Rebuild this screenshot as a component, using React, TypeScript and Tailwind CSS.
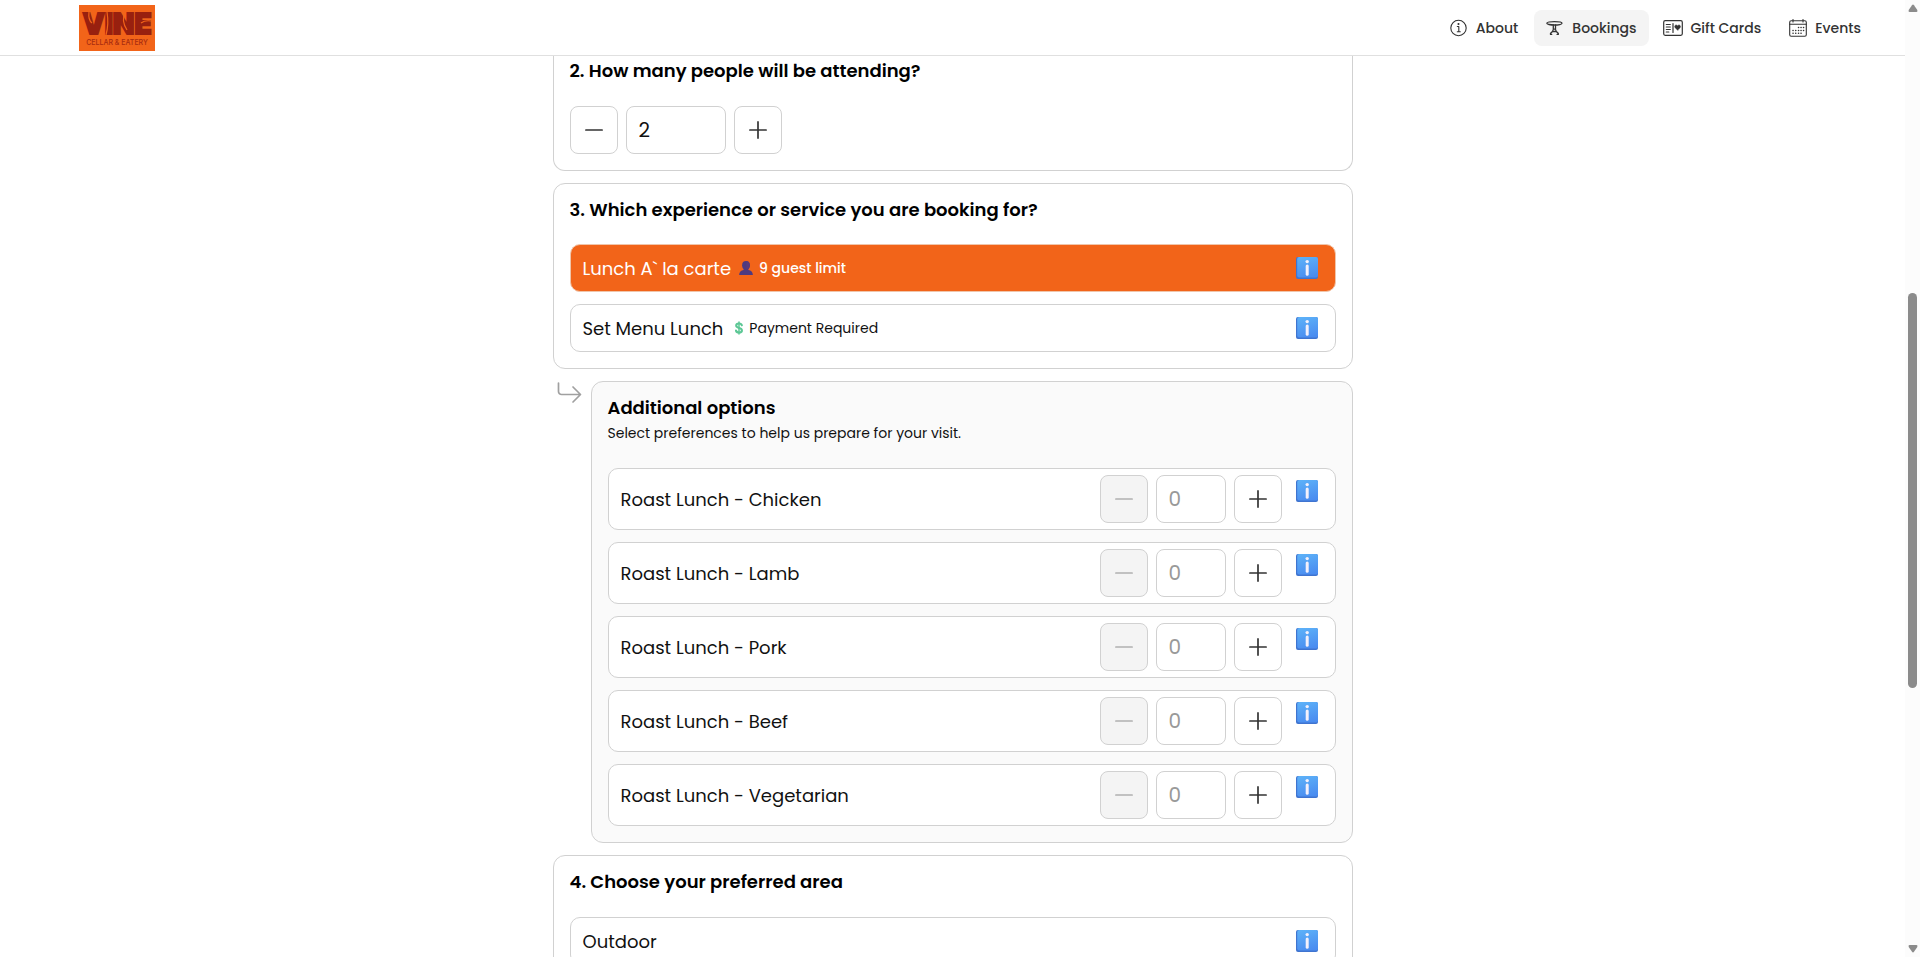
import { useState } from "react";
import type { ReactNode } from "react";

function InfoEmoji() {
  return (
    <svg viewBox="0 0 22 22" className="size-[22px] shrink-0" aria-hidden="true">
      <defs>
        <linearGradient id="infoFill" x1="0.3" y1="0" x2="0.6" y2="1">
          <stop offset="0" stopColor="#5cb0f8" />
          <stop offset="1" stopColor="#4a8cf0" />
        </linearGradient>
      </defs>
      <rect width="22" height="22" rx="2" fill="#3f74d0" />
      <rect x="1.2" width="20.8" height="20.6" rx="2" fill="url(#infoFill)" />
      <circle cx="11.2" cy="4.6" r="1.7" fill="#f3f0fb" />
      <rect x="9.7" y="7.6" width="3" height="11.2" rx="1.5" fill="#f3f0fb" />
    </svg>
  );
}

function InfoButton({ label }: { label: string }) {
  return (
    <button type="button" aria-label={`About ${label}`} className="shrink-0">
      <InfoEmoji />
    </button>
  );
}

function GuestIcon() {
  return (
    <svg viewBox="0 0 14 14" className="size-3.5" aria-hidden="true">
      <ellipse cx="7" cy="4.3" rx="3.9" ry="4.3" fill="#4d3a80" />
      <path d="M4.600 7h4.800v2c2.800.4 4.300 2 4.500 5H.1c.2-3 1.700-4.600 4.500-5z" fill="#4d3a80" />
      <path d="M7.500.1c2 .2 3.400 2 3.400 4.200S9.500 8.400 7.500 8.600z" fill="#5c3a78" />
    </svg>
  );
}

function DollarIcon() {
  return (
    <svg viewBox="0 0 8 14" className="h-3.5 w-2" fill="none" strokeLinecap="round" aria-hidden="true">
      <path d="M4 .9v12.200" stroke="#5cc795" strokeWidth="1.500" />
      <path d="M6.800 4.300C6.500 2.900 5.400 2.500 4 2.500S1.200 3.200 1.200 4.600 2.400 6.600 4 7s2.900.9 2.900 2.400S5.600 11.500 4 11.500 1.300 10.900 1 9.600" stroke="#5cc795" strokeWidth="2.100" />
    </svg>
  );
}

function Mark({ plus }: { plus?: boolean }) {
  return (
    <svg viewBox="0 0 18 18" className="size-[18px]" stroke="currentColor" strokeWidth="1.700" strokeLinecap="round" aria-hidden="true">
      <path d="M.9 9h16.200" />
      {plus && <path d="M9 .9v16.200" />}
    </svg>
  );
}

function Stepper({ label, initial, wide }: { label: string; initial: number; wide?: boolean }) {
  const [value, setValue] = useState(initial);
  const base = "flex size-12 items-center justify-center rounded-lg border border-[#d1d1d1]";
  return (
    <div className="flex gap-2">
      <button
        type="button"
        aria-label={`Fewer: ${label}`}
        disabled={value === 0}
        onClick={() => setValue(value - 1)}
        className={`${base} bg-white text-[#333] disabled:bg-[#f4f4f4] disabled:text-[#b0b0b0]`}
      >
        <Mark />
      </button>
      <input
        type="text"
        inputMode="numeric"
        aria-label={label}
        value={value}
        onChange={(e) => setValue(Number(e.target.value) || 0)}
        className={`h-12 rounded-lg border border-[#d1d1d1] bg-white px-3 text-xl outline-none ${wide ? "w-[100px]" : "w-[70px]"} ${value === 0 ? "text-[#999]" : "text-[#111]"}`}
      />
      <button type="button" aria-label={`More: ${label}`} onClick={() => setValue(value + 1)} className={`${base} bg-white text-[#333]`}>
        <Mark plus />
      </button>
    </div>
  );
}

function Option({ name, selected, children }: { name: string; selected?: boolean; children?: ReactNode }) {
  return (
    <div
      className={`flex h-12 items-center justify-between rounded-[10px] border pr-[17px] ${selected ? "border-[#f0c5aa] bg-[#f26419] text-white" : "border-[#d1d1d1] bg-white"}`}
    >
      <button type="button" aria-pressed={selected ?? false} className="flex h-full flex-1 items-center gap-2 pl-3 text-left">
        <span className="pt-px text-lg">{name}</span>
        {children}
      </button>
      <InfoButton label={name} />
    </div>
  );
}

function Logo() {
  return (
    <svg viewBox="0 0 76 46" className="h-[46px] w-[76px]" role="img" aria-label="Vine Cellar & Eatery">
      <rect width="76" height="46" fill="#f26419" />
      <text x="38" y="29" textAnchor="middle" fontFamily="Inter, sans-serif" fontWeight="900" fontSize="28" fill="#98200f" stroke="#98200f" strokeWidth="1.800">
        VINE
      </text>
      <path d="M10 7q-1 8 3 11M28 7q2 12-1 23M46 7q-4 9 2 18M62 18q4-3 10-2" fill="none" stroke="#f26419" strokeWidth="1.200" />
      <text x="38" y="40" textAnchor="middle" fontFamily="Inter, sans-serif" fontWeight="500" fontSize="7" fill="#a82c10">
        CELLAR &amp; EATERY
      </text>
    </svg>
  );
}

const line = { fill: "none", stroke: "currentColor", strokeLinecap: "round", strokeLinejoin: "round" } as const;

function AboutIcon() {
  return (
    <svg viewBox="0 0 18 18" className="size-[18px]" {...line} strokeWidth="1.100" aria-hidden="true">
      <circle cx="8.500" cy="9" r="7.700" />
      <path d="M7.300 7.500H8.800v5M7.300 12.700h3" />
      <circle cx="8.500" cy="5" r=".5" fill="currentColor" />
    </svg>
  );
}

function TableIcon() {
  return (
    <svg viewBox="0 0 18 18" className="size-[18px]" {...line} strokeWidth="1.300" aria-hidden="true">
      <ellipse cx="8.400" cy="4.300" rx="7.600" ry="1.700" />
      <path d="M7.300 6v4M9.500 6v4M7.300 10.200h2.200M7.300 10.200c-.2 1.800-1.200 3.300-2.800 4.200v1h1.200M9.500 10.200c.2 1.800 1.200 3.300 2.800 4.200v1h-1.200M6.600 12.500h3.600" />
    </svg>
  );
}

function GiftCardIcon() {
  return (
    <svg viewBox="0 0 20 18" className="h-[18px] w-5 shrink-0" {...line} strokeWidth="1.200" aria-hidden="true">
      <rect x=".7" y="1.700" width="18.600" height="14.600" rx="1.500" />
      <path d="M3.300 5.500h4M3.300 8h4M3.300 10.500h4M3.300 13h2.500M10 4.500v9" />
      <path d="M14.600 11.300l-2.500-2.600c-1.500-1.800 1-4 2.500-2 1.500-2 4 .2 2.500 2z" fill="currentColor" strokeWidth=".4" />
    </svg>
  );
}

function EventsIcon() {
  return (
    <svg viewBox="0 0 18 18" className="size-[18px]" {...line} strokeWidth="1.100" aria-hidden="true">
      <rect x=".7" y="1.700" width="16.600" height="15.600" rx="1.500" />
      <path d="M.7 5.300h16.600M4 .5v2.400M14 .5v2.400" />
      <path d="M9.500 8.500h.1M12 8.500h.1M14.500 8.500h.1M4 11.500h.1M6.700 11.500h.1M9.500 11.500h.1M12 11.500h.1M14.500 11.500h.1M4 14.200h.1M6.700 14.200h.1M9.500 14.200h.1M12 14.200h.1" strokeWidth="1.500" />
    </svg>
  );
}

const nav = [
  { name: "About", icon: <AboutIcon /> },
  { name: "Bookings", icon: <TableIcon />, active: true },
  { name: "Gift Cards", icon: <GiftCardIcon /> },
  { name: "Events", icon: <EventsIcon /> },
];

const extras = ["Chicken", "Lamb", "Pork", "Beef", "Vegetarian"];

const card = "rounded-xl border border-[#d1d1d1] px-4";
const heading = "text-lg leading-5 font-semibold text-black";

export default function App() {
  return (
    <div className="flex h-screen overflow-hidden bg-white font-[Poppins,Inter,sans-serif] text-[#111]">
      <div className="flex min-w-0 flex-1 flex-col">
        <header className="flex h-14 shrink-0 items-center justify-between border-b border-[#e0e0e0] pr-8 pl-[79px]">
          <a href="#home">
            <Logo />
          </a>
          <nav className="flex gap-1">
            {nav.map((item) => (
              <a
                key={item.name}
                href="#nav"
                className={`flex h-9 items-center gap-2 rounded-lg px-3 text-sm font-medium text-[#333] ${item.active ? "bg-[#f4f4f4]" : ""}`}
              >
                <span className="flex w-[18px] justify-end">{item.icon}</span>
                {item.name}
              </a>
            ))}
          </nav>
        </header>

        <main className="min-h-0 flex-1 overflow-hidden">
          <div className="mx-auto flex max-w-[800px] flex-col gap-3">
            <section className="rounded-b-xl border border-t-0 border-[#d1d1d1] px-4 pt-[5px] pb-4">
              <h2 className={heading}>2. How many people will be attending?</h2>
              <div className="mt-[25px]">
                <Stepper label="Number of people" initial={2} wide />
              </div>
            </section>

            <section className={`${card} py-4`}>
              <h2 className={heading}>3. Which experience or service you are booking for?</h2>
              <div className="mt-6 flex flex-col gap-3">
                <Option name="Lunch A` la carte" selected>
                  <span className="flex items-center gap-1.5 text-sm font-medium">
                    <GuestIcon />9 guest limit
                  </span>
                </Option>
                <Option name="Set Menu Lunch">
                  <span className="flex items-center gap-1.5 pl-1 text-sm">
                    <DollarIcon />
                    Payment Required
                  </span>
                </Option>
              </div>
            </section>

            <div className="flex">
              <div className="w-[38px] shrink-0 pt-px pl-1">
                <svg viewBox="0 0 26 22" className="h-[22px] w-[26px]" {...line} strokeWidth="1.700" stroke="#a0a0a0" aria-hidden="true">
                  <path d="M1.500 1v8.500a3 3 0 0 0 3 3h18.500M16 5l7.500 7.500-7.500 7.500" />
                </svg>
              </div>
              <section className={`${card} flex-1 bg-[#fafafa] py-4`}>
                <h2 className={heading}>Additional options</h2>
                <p className="mt-1 text-sm leading-[22px]">Select preferences to help us prepare for your visit.</p>
                <ul className="mt-6 flex flex-col gap-3">
                  {extras.map((extra) => (
                    <li key={extra} className="flex justify-between rounded-[10px] border border-[#d1d1d1] bg-white py-1.5 pr-[17px] pl-3">
                      <span className="self-center pt-px text-lg">Roast Lunch - {extra}</span>
                      <div className="flex items-start gap-3.5">
                        <Stepper label={`Roast Lunch - ${extra}`} initial={0} />
                        <div className="flex pt-[5px]">
                          <InfoButton label={`Roast Lunch - ${extra}`} />
                        </div>
                      </div>
                    </li>
                  ))}
                </ul>
              </section>
            </div>

            <section className={`${card} py-4`}>
              <h2 className={heading}>4. Choose your preferred area</h2>
              <div className="mt-[25px]">
                <Option name="Outdoor" />
              </div>
            </section>
          </div>
        </main>
      </div>

      <div className="flex w-[15px] shrink-0 flex-col items-center bg-[#fcfcfc] py-1" aria-hidden="true">
        <svg viewBox="0 0 10 8" className="h-2 w-2.5" fill="#8b8b8b">
          <path d="M4 1.200Q5 0 6 1.200L9.300 6Q10 8 8.500 8H1.500Q0 8 .7 6z" />
        </svg>
        <div className="flex w-full flex-1 flex-col items-center">
          <div className="flex-[281]" />
          <div className="w-[9px] flex-[395] rounded-full bg-[#8b8b8b]" />
          <div className="flex-[257]" />
        </div>
        <svg viewBox="0 0 10 8" className="h-2 w-2.5" fill="#8b8b8b">
          <path d="M4 6.800Q5 8 6 6.800L9.300 2Q10 0 8.500 0H1.500Q0 0 .7 2z" />
        </svg>
      </div>
    </div>
  );
}
